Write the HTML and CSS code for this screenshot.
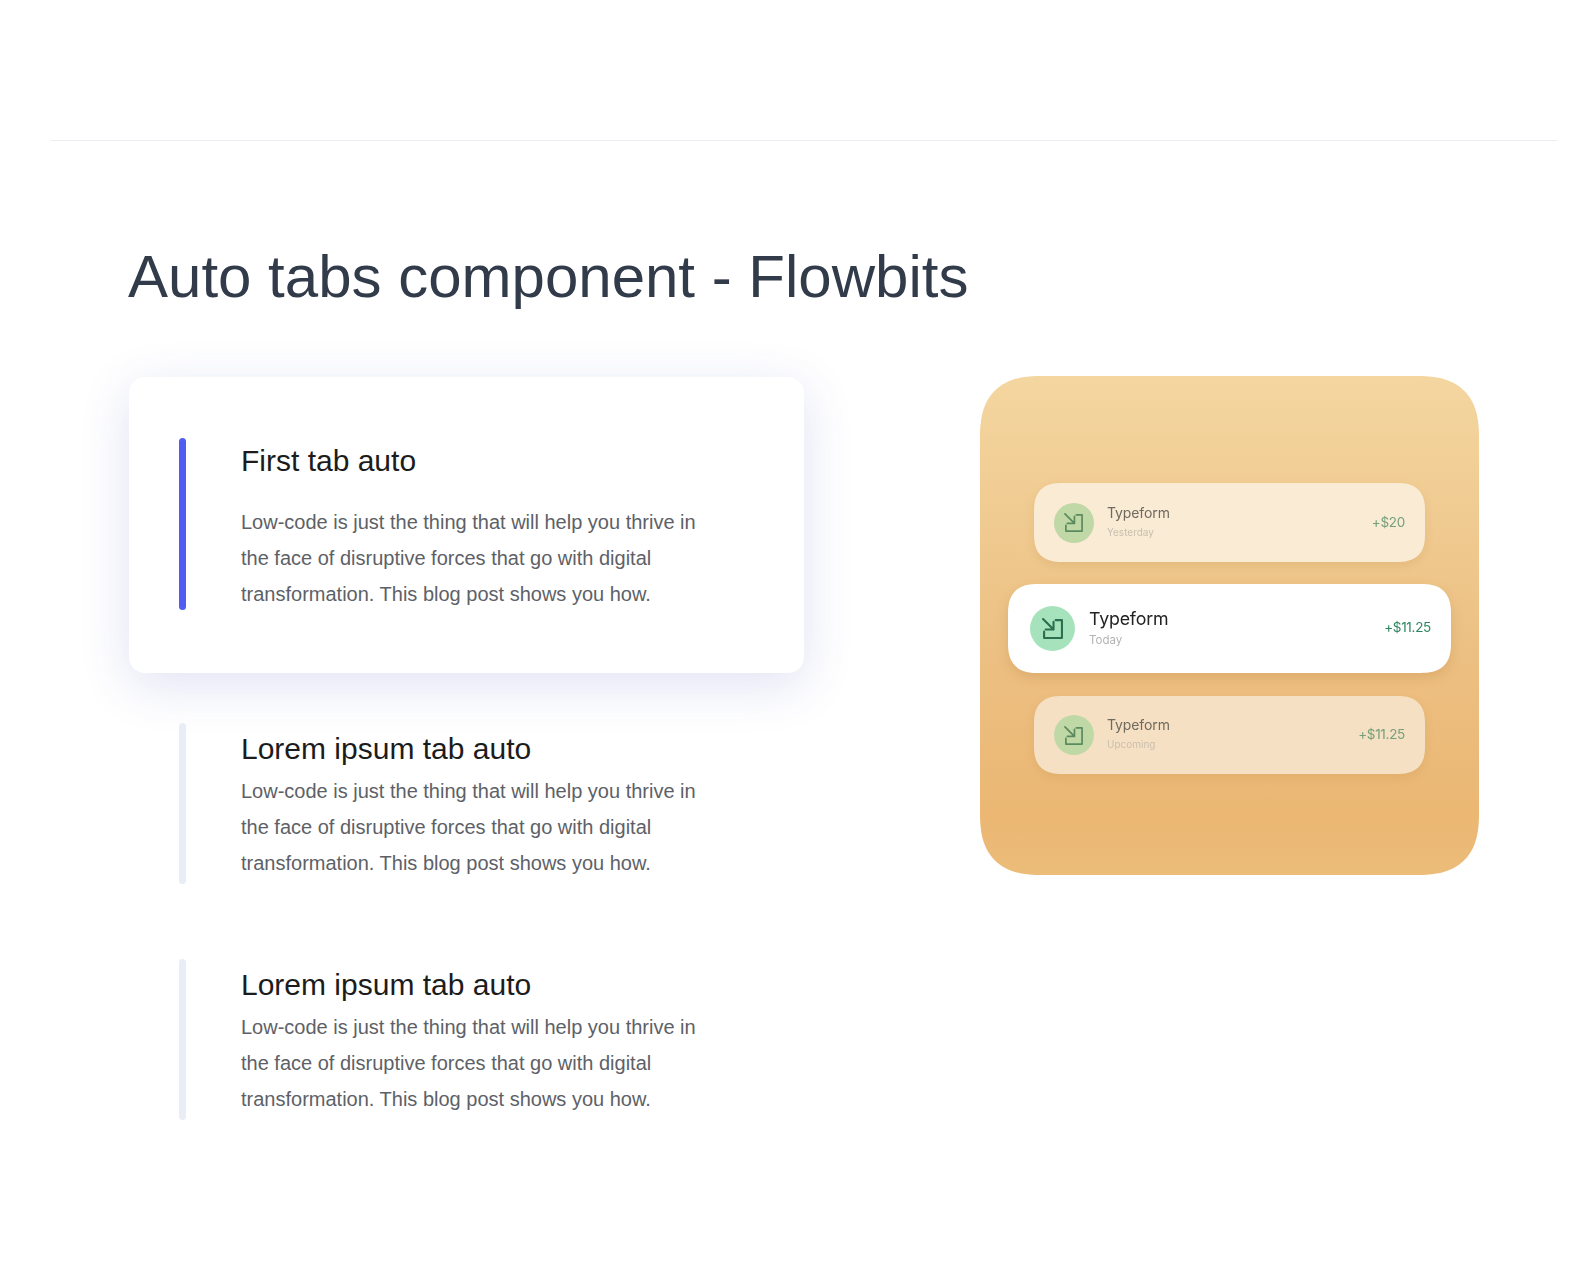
FILE: index.html
```html
<!DOCTYPE html>
<html lang="en">
<head>
<meta charset="utf-8">
<title>Auto tabs component - Flowbits</title>
<link rel="stylesheet" href="styles.css">
</head>
<body>
<header class="topbar"></header>
<main class="section">
  <h1 class="title">Auto tabs component - Flowbits</h1>
  <div class="columns">
    <div class="tabs">
      <article class="tab tab-active">
        <span class="bar"></span>
        <div class="tab-body">
          <h2 class="tab-title">First tab auto</h2>
          <p class="tab-text">Low-code is just the thing that will help you thrive in the face of disruptive forces that go with digital transformation. This blog post shows you how.</p>
        </div>
      </article>
      <article class="tab tab-second">
        <span class="bar"></span>
        <div class="tab-body">
          <h2 class="tab-title">Lorem ipsum tab auto</h2>
          <p class="tab-text">Low-code is just the thing that will help you thrive in the face of disruptive forces that go with digital transformation. This blog post shows you how.</p>
        </div>
      </article>
      <article class="tab">
        <span class="bar"></span>
        <div class="tab-body">
          <h2 class="tab-title">Lorem ipsum tab auto</h2>
          <p class="tab-text">Low-code is just the thing that will help you thrive in the face of disruptive forces that go with digital transformation. This blog post shows you how.</p>
        </div>
      </article>
    </div>
    <div class="visual">
      <div class="pay pay-top">
        <span class="pay-icon"><svg viewBox="0 0 20 20"><path d="M1 1 11 11M11 3.5V11H3.5M13 2h6v17H2v-6"/></svg></span>
        <div class="pay-info"><div class="pay-name">Typeform</div><div class="pay-date">Yesterday</div></div>
        <div class="pay-amount">+$20</div>
      </div>
      <div class="pay pay-main">
        <span class="pay-icon"><svg viewBox="0 0 20 20"><path d="M1 1 11 11M11 3.5V11H3.5M13 2h6v17H2v-6"/></svg></span>
        <div class="pay-info"><div class="pay-name">Typeform</div><div class="pay-date">Today</div></div>
        <div class="pay-amount">+$11.25</div>
      </div>
      <div class="pay pay-bottom">
        <span class="pay-icon"><svg viewBox="0 0 20 20"><path d="M1 1 11 11M11 3.5V11H3.5M13 2h6v17H2v-6"/></svg></span>
        <div class="pay-info"><div class="pay-name">Typeform</div><div class="pay-date">Upcoming</div></div>
        <div class="pay-amount">+$11.25</div>
      </div>
    </div>
  </div>
</main>
</body>
</html>
```
FILE: styles.css
```css
* { box-sizing: border-box; }
html, body { margin: 0; padding: 0; }
body { background: #fff; font-family: "Liberation Sans", Arial, sans-serif; overflow: hidden; height: 1270px; }

.topbar { height: 141px; margin: 0 31px 0 50px; border-bottom: 1px solid #eceef3; }

.section { padding: 98px 109px 0 129px; }
.title { margin: 0 0 62px -1px; font-size: 60px; line-height: 76px; font-weight: 400; color: #323b4a; }

.columns { display: flex; justify-content: space-between; align-items: flex-start; }

.tabs { width: 675px; }
.tab { display: flex; gap: 55px; padding: 0 50px; margin-bottom: 75px; }
.tab-active {
  padding-top: 61px; padding-bottom: 63px; margin-bottom: 50px;
  background: #fff; border-radius: 16px;
  box-shadow: 0 12px 50px rgba(60, 75, 180, .16);
}
.bar { flex: none; width: 7px; background: #e9edf5; border-radius: 4px; }
.tab-active .bar { background: #505df0; }
.tab-body { width: 470px; padding: 3px 0; }
.tab-active .tab-body { padding: 0; }
.tab-title { margin: 0 0 2px; font-size: 30px; line-height: 45px; font-weight: 400; color: #1c1c1c; }
.tab-active .tab-title { margin-bottom: 21px; }
.tab-text { margin: 0; font-size: 20px; line-height: 36px; color: #5d6167; }
.tab-active .tab-text { margin-bottom: -2px; }

.visual {
  width: 499px; height: 499px; margin-top: -1px; padding-top: 107px; flex: none;
  display: flex; flex-direction: column; align-items: center; gap: 22px;
  border-radius: 62px; corner-shape: superellipse(1.35);
  background: linear-gradient(180deg, #f4d6a0 0%, #ecc083 55%, #ebb773 88%, #ecbc79 100%);
  font-family: Inter, "Liberation Sans", sans-serif;
}
.pay { display: flex; align-items: center; width: 391px; height: 79px; padding: 0 20px; border-radius: 28px; corner-shape: superellipse(1.35); box-shadow: 0 4px 10px rgba(170, 110, 40, .14); }
.pay > * { filter: blur(.3px); }
.pay-top { background: #faebd5; }
.pay-bottom { height: 78px; background: #f6e0c4; }
.pay-main { width: 443px; height: 89px; margin-bottom: 1px; padding: 0 20px 0 22px; background: #fff; border-radius: 30px; box-shadow: 0 5px 12px rgba(170, 110, 40, .22); }

.pay-icon { flex: none; display: flex; align-items: center; justify-content: center; width: 40px; height: 40px; border-radius: 50%; background: #bfd8a6; }
.pay-icon svg { width: 19px; height: 19px; margin-left: -1px; fill: none; stroke: #5b8a5e; stroke-width: 1.8; stroke-linecap: round; stroke-linejoin: round; }
.pay-main .pay-icon { width: 45px; height: 45px; background: #a6e3bc; }
.pay-main .pay-icon svg { width: 21px; height: 21px; stroke: #2c6e4d; stroke-width: 2; }

.pay-info { flex: 1; margin-left: 13px; margin-top: -3px; }
.pay-main .pay-info { margin-left: 14px; margin-top: -1px; }
.pay-name { font-size: 14px; line-height: 18px; color: #6f6a5e; letter-spacing: -.1px; }
.pay-date { font-size: 10px; line-height: 14px; margin-top: 3px; color: #c9bfae; }
.pay-main .pay-name { font-size: 17.8px; line-height: 22px; color: #222; letter-spacing: -.2px; }
.pay-main .pay-date { font-size: 11.5px; line-height: 16px; margin-top: 2px; color: #b3b3b3; }
.pay-amount { font-size: 13.5px; color: #72a07a; margin-top: -2px; letter-spacing: -.3px; }
.pay-main .pay-amount { color: #2e8561; margin-top: -4px; }
```
